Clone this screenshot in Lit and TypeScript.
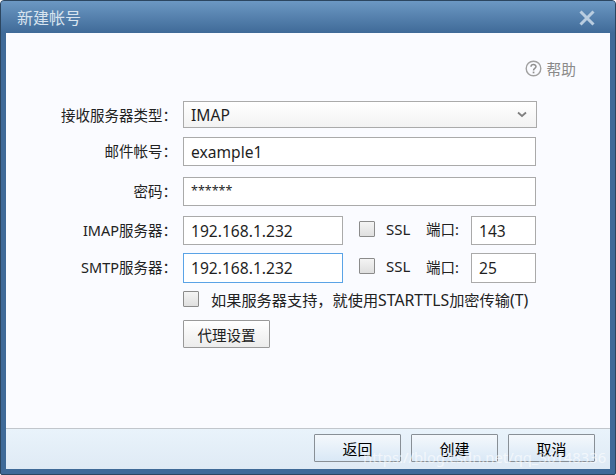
import { LitElement, html, css } from "lit";
import { customElement } from "lit/decorators.js";

@customElement("app-root")
export class AppRoot extends LitElement {
  static styles = css`
    :host {
      display: block;
      width: 616px;
      height: 475px;
      font-family: "Noto Sans", "Noto Sans CJK SC", sans-serif;
      font-size: 14.5px;
      color: #222;
      background: #fff;
    }
    * { box-sizing: border-box; }
    .win {
      position: relative;
      width: 616px;
      height: 475px;
      display: flex;
      flex-direction: column;
      padding: 0 5px 5px;
      background: #3f6a98;
      border: 1px solid #2c4660;
      border-radius: 4px 4px 2px 2px;
      overflow: hidden;
    }
    .title {
      height: 32px;
      flex: none;
      margin: 0 -5px;
      padding: 0 20px 0 16px;
      display: flex;
      align-items: center;
      justify-content: space-between;
      background: linear-gradient(#6c98c3, #3f6a98);
      color: #d8e4ef;
      font-size: 16px;
    }
    .close { display: block; margin-top: 2px; }
    .body {
      flex: 1;
      display: flex;
      flex-direction: column;
      background: #fafbff;
      position: relative;
    }
    .help {
      height: 68px;
      flex: none;
      padding: 26px 34px 0 0;
      display: flex;
      justify-content: flex-end;
      align-items: flex-start;
      gap: 5px;
      color: #8a8a8a;
      font-size: 14.7px;
      line-height: 20px;
    }
    .help svg { margin-top: 1px; }
    .rows { flex: 1; display: flex; flex-direction: column; }
    .row { display: flex; align-items: center; flex: none; }
    .r1 { height: 27px; margin-bottom: 9px; }
    .r2 { height: 29px; margin-bottom: 11px; }
    .r3 { height: 29px; margin-bottom: 10px; }
    .r3b { height: 29px; margin-bottom: 8px; }
    .r4 { height: 30px; margin-bottom: 5px; }
    .r5 { height: 22px; margin-bottom: 10px; }
    .label {
      width: 171px;
      flex: none;
      text-align: right;
      margin-right: 6px;
      padding-bottom: 2px;
      white-space: nowrap;
    }
    .r1 .label { padding-bottom: 0; }
    .r4 .label { padding-bottom: 4px; }
    .input {
      height: 100%;
      border: 1px solid #aaa;
      background: #fff;
      padding: 0 0 0 7px;
      display: flex;
      align-items: center;
      font-size: 15.6px;
      color: #1f1f1f;
    }
    .r3b .input { padding-top: 1px; }
    .full { width: 353px; }
    .pass { font-size: 12.5px; padding-bottom: 2px; }
    .host { width: 160px; }
    .focus { border-color: #5aa3e6; }
    .port { width: 65px; }
    .select {
      width: 354px;
      justify-content: space-between;
      padding-right: 9px;
      background: linear-gradient(#fff, #f2f2f2);
    }
    .check {
      width: 16px;
      height: 16px;
      flex: none;
      border: 1px solid #8b8b8b;
      border-radius: 1px;
      background: linear-gradient(#f4f4f4, #dfdfdf);
    }
    .ssl { margin: 0 0 4px 16px; }
    .ssl-t { margin: 0 0 4px 11px; width: 40px; flex: none; font-size: 15px; }
    .port-l { width: 45px; flex: none; margin-bottom: 4px; white-space: nowrap; }
    .opts { margin-left: 177px; }
    .opts-t { margin-left: 12px; white-space: nowrap; font-size: 15.2px; }
    .latin { font-size: 15.8px; }
    .btn {
      height: 28px;
      border: 1px solid #999;
      border-radius: 1px;
      display: flex;
      align-items: center;
      justify-content: center;
      color: #222;
    }
    .proxy {
      width: 87px;
      margin-left: 177px;
      background: linear-gradient(#fff, #ececec);
    }
    .foot {
      height: 41px;
      flex: none;
      border-top: 1px solid #c1c6cc;
      background: linear-gradient(#e9f3fb, #dfeaf5);
      display: flex;
      align-items: flex-start;
      justify-content: flex-end;
      gap: 10px;
      padding: 5px 15px 0 0;
    }
    .foot .btn {
      width: 87px;
      color: #000;
      font-size: 15px;
      border-color: #888f96;
      background: linear-gradient(#f4f8fc, #d9e8f6);
    }
    .mark {
      position: absolute;
      left: 362px;
      top: 446px;
      color: rgba(255, 255, 255, 0.6);
      font-size: 14.8px;
      white-space: nowrap;
      pointer-events: none;
    }
  `;

  render() {
    return html`
      <div class="win">
        <div class="title">
          <span>新建帐号</span>
          <svg class="close" width="16" height="16" viewBox="0 0 16 16">
            <path d="M1.5 1.5 L14.5 14.5 M14.5 1.5 L1.5 14.5" stroke="#b9cde0" stroke-width="3" fill="none" />
          </svg>
        </div>
        <div class="body">
          <div class="help">
            <svg width="17" height="17" viewBox="0 0 17 17">
              <circle cx="8.5" cy="8.5" r="7.3" fill="none" stroke="#a0a0a0" stroke-width="1.4" />
              <path d="M6 6.7 C6 3.8 11 3.8 11 6.6 C11 8.4 8.5 8.4 8.5 10.4" fill="none" stroke="#909090" stroke-width="1.5" />
              <rect x="7.7" y="11.6" width="1.7" height="1.7" fill="#909090" />
            </svg>
            <span>帮助</span>
          </div>
          <div class="rows">
            <div class="row r1">
              <div class="label">接收服务器类型：</div>
              <div class="input select">
                <span>IMAP</span>
                <svg width="10" height="7" viewBox="0 0 10 7">
                  <path d="M1 1.5 L5 5 L9 1.5" fill="none" stroke="#808080" stroke-width="1.8" />
                </svg>
              </div>
            </div>
            <div class="row r2">
              <div class="label">邮件帐号：</div>
              <div class="input full">example1</div>
            </div>
            <div class="row r3">
              <div class="label">密码：</div>
              <div class="input full pass">******</div>
            </div>
            <div class="row r3b">
              <div class="label">IMAP服务器：</div>
              <div class="input host">192.168.1.232</div>
              <div class="check ssl"></div>
              <span class="ssl-t">SSL</span>
              <span class="port-l">端口:</span>
              <div class="input port">143</div>
            </div>
            <div class="row r4">
              <div class="label">SMTP服务器：</div>
              <div class="input host focus">192.168.1.232</div>
              <div class="check ssl"></div>
              <span class="ssl-t">SSL</span>
              <span class="port-l">端口:</span>
              <div class="input port">25</div>
            </div>
            <div class="row r5 opts">
              <div class="check"></div>
              <span class="opts-t">如果服务器支持，就使用<span class="latin">STARTTLS</span>加密传输<span class="latin">(T)</span></span>
            </div>
            <div class="row">
              <div class="btn proxy">代理设置</div>
            </div>
          </div>
          <div class="foot">
            <div class="btn">返回</div>
            <div class="btn">创建</div>
            <div class="btn">取消</div>
          </div>
        </div>
        <div class="mark">https://blog.csdn.net/qq_36148336</div>
      </div>
    `;
  }
}
